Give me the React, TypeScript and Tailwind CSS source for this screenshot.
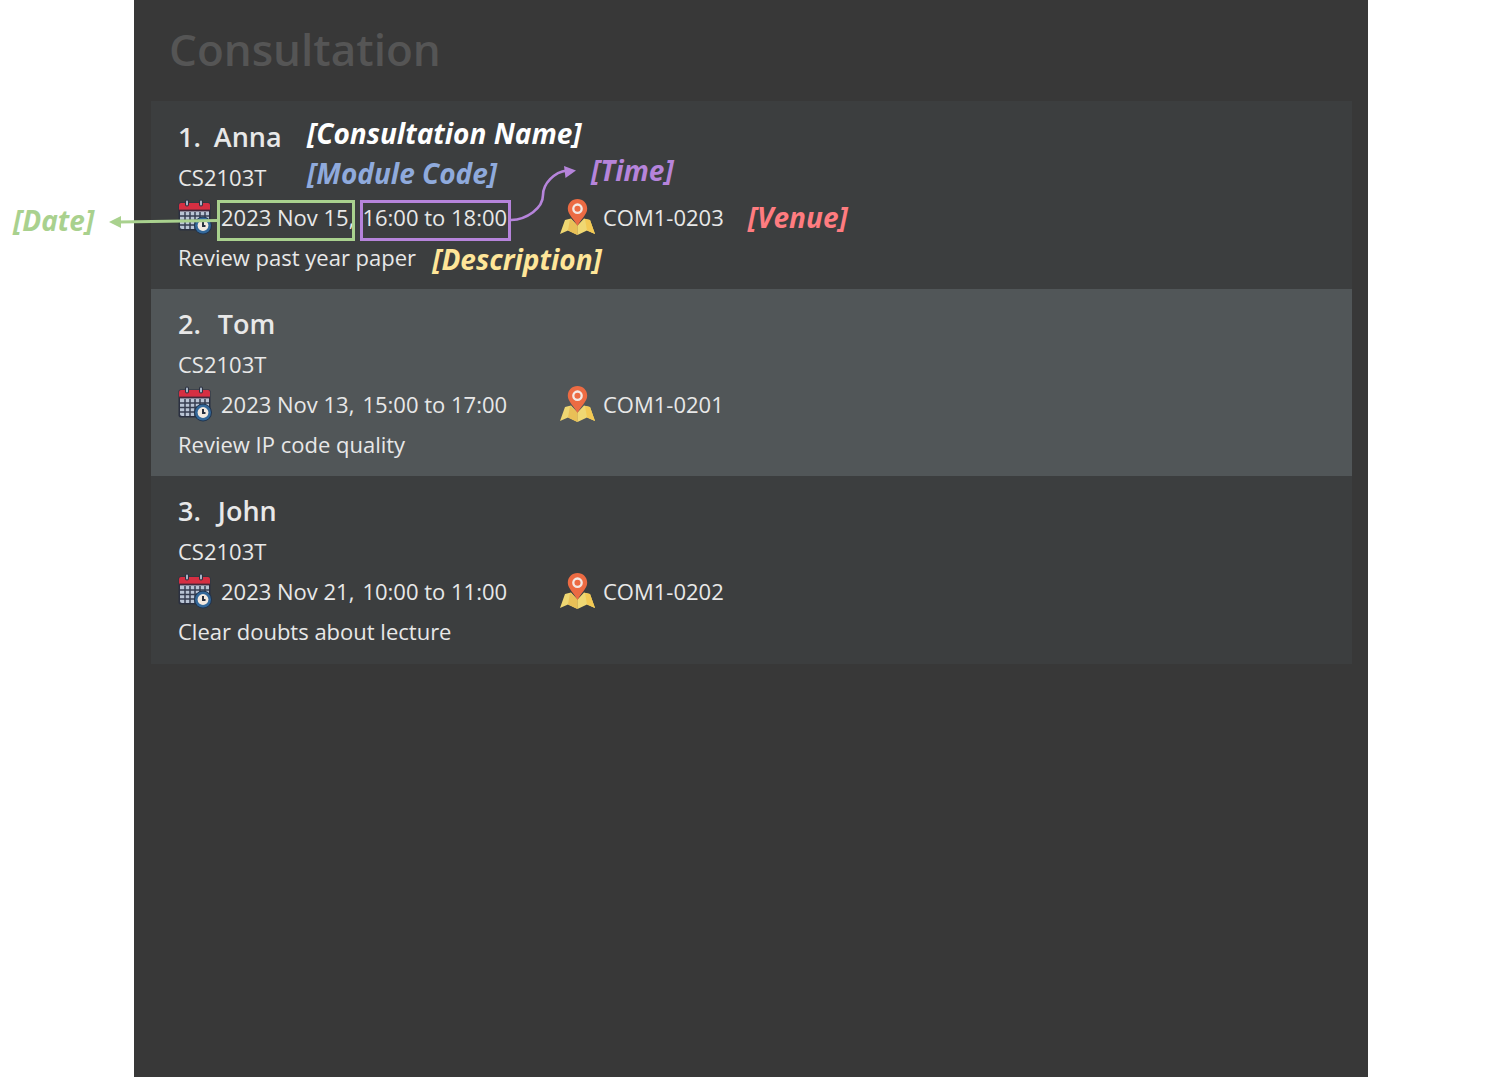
import React from "react";

type Notes = { name: string; module: string; venue: string; description: string };

type Consultation = {
  name: string;
  module: string;
  date: string;
  time: string;
  venue: string;
  description: string;
  notes?: Notes;
};

const consultations: Consultation[] = [
  {
    name: "Anna",
    module: "CS2103T",
    date: "2023 Nov 15",
    time: "16:00 to 18:00",
    venue: "COM1-0203",
    description: "Review past year paper",
    notes: { name: "[Consultation Name]", module: "[Module Code]", venue: "[Venue]", description: "[Description]" },
  },
  { name: "Tom", module: "CS2103T", date: "2023 Nov 13", time: "15:00 to 17:00", venue: "COM1-0201", description: "Review IP code quality" },
  { name: "John", module: "CS2103T", date: "2023 Nov 21", time: "10:00 to 11:00", venue: "COM1-0202", description: "Clear doubts about lecture" },
];

function CalendarIcon() {
  return (
    <svg width="36" height="36" viewBox="1 -1 36 36" aria-hidden="true" className="shrink-0">
      <rect x="1.500" y="2.500" width="32" height="28" rx="2" fill="#2b3040" />
      <path d="M3 10h29v17a2 2 0 0 1-2 2H5a2 2 0 0 1-2-2z" fill="#b9c4d4" />
      <path d="M2 5a2 2 0 0 1 2-2h27a2 2 0 0 1 2 2v5H2z" fill="#d62f42" />
      <path d="M2 10.500h31" stroke="#42283a" strokeWidth="1.800" />
      <path d="M3 16h29M3 20.500h29M3 25h22M8 12v17M13 12v17M18 12v17M23 12v14M28 12v10" stroke="#363d50" strokeWidth="1.500" />
      <path d="M10 1.500v3M24 1.500v3" stroke="#2b3040" strokeWidth="4" strokeLinecap="round" />
      <path d="M10 1.500v3M24 1.500v3" stroke="#a9b6c6" strokeWidth="2" strokeLinecap="round" />
      <circle cx="26" cy="25.500" r="9" fill="#20334c" />
      <circle cx="26" cy="25.500" r="8" fill="#33689a" />
      <circle cx="26" cy="25.500" r="5.400" fill="#f2e9e0" />
      <path d="M26 22v4h2.500" stroke="#27303f" strokeWidth="2" fill="none" />
    </svg>
  );
}

function MapPinIcon() {
  return (
    <svg width="36" height="36" viewBox="0 0 36 36" aria-hidden="true" className="shrink-0">
      <path d="M5 21L11 19.500l6.500 7V36L8 31.500 0 35z" fill="#efd772" />
      <path d="M30 21l-6-1.500-6.500 7V36l9.500-4.500 8 3.500z" fill="#f0d873" />
      <path d="M10 20l7.500 6.500V36L8 31.500z" fill="#e9c057" />
      <path d="M25 20l5 1 5 14-8-3.500z" fill="#f3c954" />
      <path d="M17.500 0C12 0 7.800 4.200 7.800 9.700c0 5.800 6.700 10.800 9.700 17.300 3-6.500 9.700-11.500 9.700-17.300C27.200 4.200 23 0 17.500 0z" fill="#ec6b43" />
      <circle cx="17.500" cy="9.700" r="4.200" fill="#ec6b43" stroke="#f3e9e4" strokeWidth="2.300" />
    </svg>
  );
}

const noteText = "font-['Open_Sans'] text-[28px] font-bold italic whitespace-nowrap";

function Callouts() {
  return (
    <div className="pointer-events-none absolute inset-0">
      <span className={`${noteText} absolute top-[50px] left-[440px] leading-9 text-[#b684db]`}>[Time]</span>
      <span className={`${noteText} absolute top-[100px] -left-[138px] leading-9 text-[#a9d18e]`}>[Date]</span>
      <div className="absolute top-[98px] left-[66px] h-[41px] w-[138px] border-3 border-[#a9d18e]" />
      <div className="absolute top-[98px] left-[209px] h-[41px] w-[151px] border-3 border-[#b684db]" />
      <svg className="absolute top-[113px] -left-[42px]" width="109" height="14" viewBox="0 0 109 14" aria-hidden="true">
        <path d="M10 7L109 5.500" stroke="#a9d18e" strokeWidth="3" />
        <path d="M0 7L12 1v12z" fill="#a9d18e" />
      </svg>
      <svg className="absolute top-[62px] left-[359px]" width="68" height="60" viewBox="0 0 68 60" aria-hidden="true">
        <path d="M1 56C17 55.500 33 44 33 31C33 20 44 8 57 6.500" stroke="#b684db" strokeWidth="2.600" fill="none" />
        <path d="M66 6.500L54 2l1.500 12z" fill="#b684db" />
      </svg>
    </div>
  );
}

function ConsultationCard({ item, index }: { item: Consultation; index: number }) {
  const { notes } = item;
  return (
    <li className={`relative pt-[15px] pr-4 pb-3 pl-[27px] ${index === 1 ? "bg-[#515658]" : "bg-[#3c3e3f]"}`}>
      <div className="flex h-10">
        <h2 className={`flex text-[27px] leading-10 font-semibold ${notes ? "w-[129px] gap-[13px]" : "gap-[17px]"}`}>
          <span>{index + 1}.</span>
          <span>{item.name}</span>
        </h2>
        {notes && <span className={`${noteText} leading-8 text-white`}>{notes.name}</span>}
      </div>
      <div className="flex h-10">
        <p className={`leading-10 ${notes ? "w-[129px]" : ""}`}>{item.module}</p>
        {notes && <span className={`${noteText} leading-8 text-[#8faadc]`}>{notes.module}</span>}
      </div>
      <div className="flex h-10 items-center">
        <div className="flex w-[382px] items-center gap-[7px] leading-10 whitespace-nowrap">
          <CalendarIcon />
          <span className="flex gap-2">
            <span>{item.date},</span>
            <span>{item.time}</span>
          </span>
        </div>
        <div className="flex items-center gap-[7px]">
          <MapPinIcon />
          <span>{item.venue}</span>
        </div>
        {notes && <span className={`${noteText} ml-6 leading-9 text-[#ff7c80]`}>{notes.venue}</span>}
      </div>
      <div className="flex h-10 items-end gap-4">
        <p className="leading-10">{item.description}</p>
        {notes && <span className={`${noteText} leading-9 text-[#ffe699]`}>{notes.description}</span>}
      </div>
      {notes && <Callouts />}
    </li>
  );
}

export default function App() {
  return (
    <div className="min-h-screen bg-white pr-36 pl-[134px]">
      <main className="min-h-screen bg-[#383838] pr-4 pl-[17px] font-['Open_Sans',sans-serif]">
        <h1 className="h-[101px] pl-[18px] text-[44px] leading-[98px] font-semibold text-[#555555]">Consultation</h1>
        <ul className="bg-[#3c3e3f] py-px text-[22px] text-[#e8e8e8]">
          {consultations.map((item, index) => (
            <ConsultationCard key={item.name} item={item} index={index} />
          ))}
        </ul>
      </main>
    </div>
  );
}
